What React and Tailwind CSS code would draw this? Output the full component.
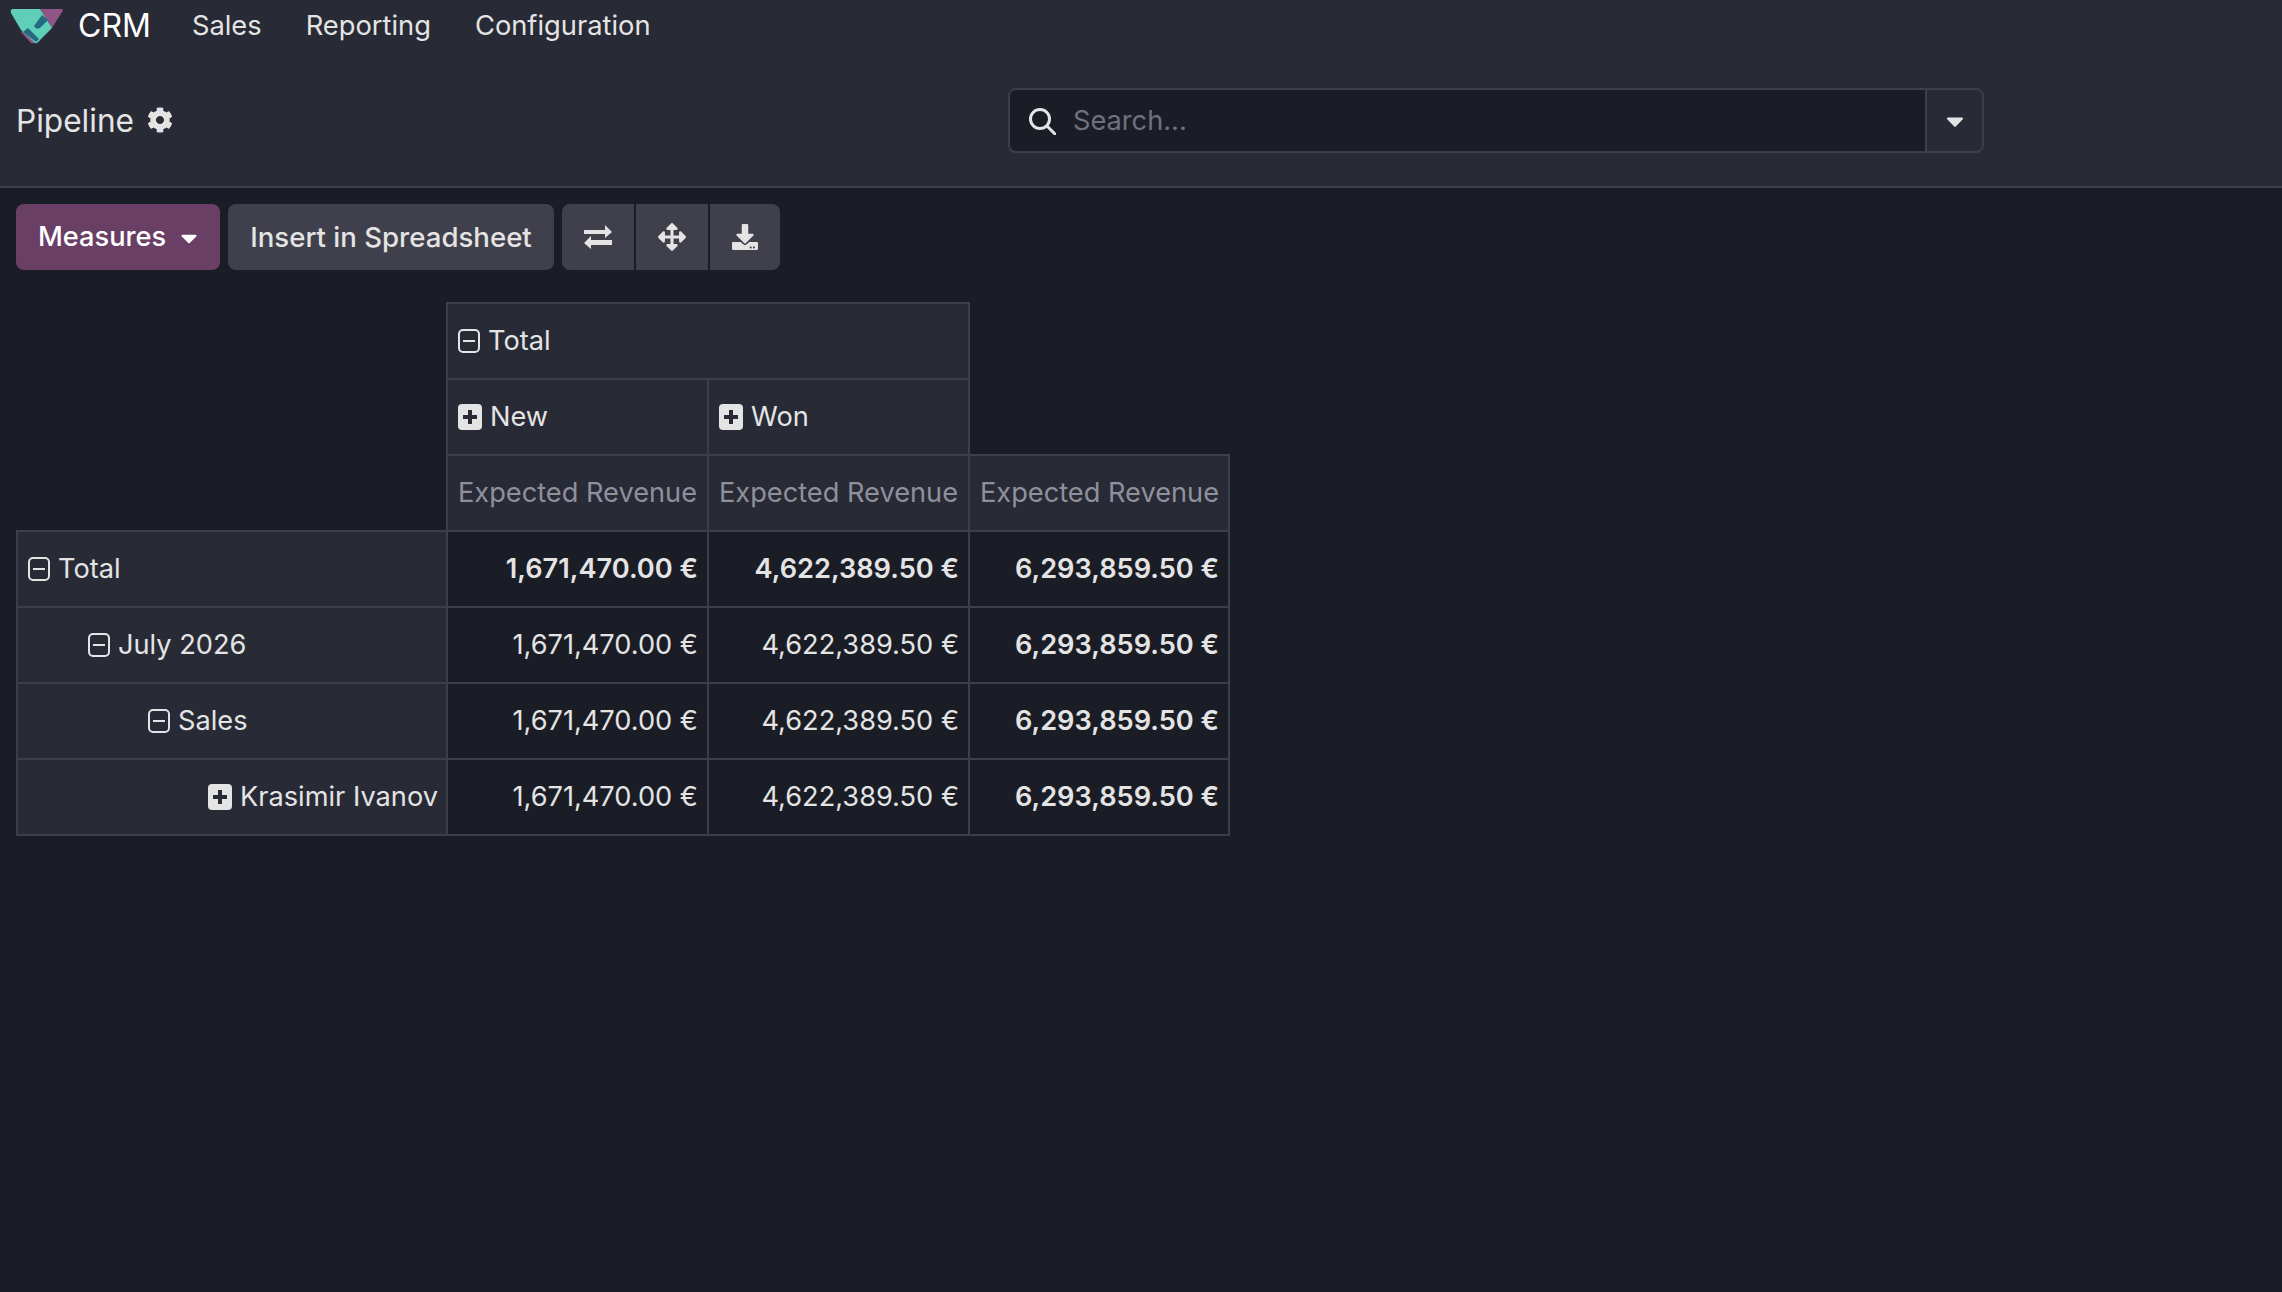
import React from 'react';
import { FaCog, FaArrowsAlt, FaDownload, FaCaretDown } from 'react-icons/fa';

const revenue = { new: '1,671,470.00 €', won: '4,622,389.50 €', total: '6,293,859.50 €' };

const rows = [
  { label: 'Total', indent: 'pl-[10px]', open: true, bold: true },
  { label: 'July 2026', indent: 'pl-[70px]', open: true },
  { label: 'Sales', indent: 'pl-[130px]', open: true },
  { label: 'Krasimir Ivanov', indent: 'pl-[190px]', open: false },
];

const Logo = () => (
  <svg viewBox="0 0 54 36" className="w-[54px] h-[36px]">
    <path d="M30 1 H51 Q54 1 52 4 L42 20 Z" fill="#8f5586" />
    <path d="M11 24 L19 19 L30 33 L24 35 Q22 36 20 34 Z" fill="#8f5586" />
    <path d="M3 1 H30 L42 20 L27 35 Q25 36 23 33 L11 22 L1 5 Q0 1 3 1 Z" fill="#5fcfb8" />
    <path d="M24 18 L32 7 L38 12 L30 20 Q26 22 24 18 Z" fill="#256b80" />
    <path d="M13 24 L18 20 L29 31 L26 34 Z" fill="#256b80" />
  </svg>
);

// square-o with a minus, and the filled square with a plus
const ExpandIcon = ({ open }) =>
  open ? (
    <svg viewBox="0 0 22 24" className="w-[22px] h-[24px] shrink-0" fill="none" stroke="currentColor" strokeWidth="2">
      <rect x="1" y="1" width="20" height="22" rx="4" />
      <path d="M5 12 H17" />
    </svg>
  ) : (
    <svg viewBox="0 0 24 26" className="w-[24px] h-[26px] shrink-0">
      <rect width="24" height="26" rx="4" fill="currentColor" />
      <path d="M12 6 V20 M5 13 H19" stroke="#282a36" strokeWidth="4" />
    </svg>
  );

const ExchangeIcon = () => (
  <svg viewBox="0 0 30 24" className="w-[30px] h-[24px]" fill="currentColor">
    <path d="M1 5 H22 V0 L29 7 L22 13 V9 H1 Z" />
    <path d="M29 15 H8 V11 L1 18 L8 24 V20 H29 Z" />
  </svg>
);

const HeaderCell = ({ label, open, ...props }) => (
  <th {...props} className="border-2 border-[#3c3e4b] bg-[#282a36] px-[10px] pt-[1px] text-left font-normal">
    <span className="flex items-center gap-[8px]">
      <ExpandIcon open={open} />
      {label}
    </span>
  </th>
);

const MeasureCell = () => (
  <th className="border-2 border-[#3c3e4b] bg-[#282a36] px-[10px] pt-[1px] text-left font-normal text-[#8f909c] whitespace-nowrap">
    Expected Revenue
  </th>
);

const App = () => {
  return (
    <div className="min-h-[1292px] bg-[#1b1d26] text-[#e4e4e4] text-[27.2px] font-['Inter',sans-serif]">
      <header className="bg-[#282a36] border-b-2 border-[#3c3e4b] h-[188px]">
        <nav className="flex items-center h-[52px] pl-[10px]">
          <Logo />
          <span className="ml-[14px] text-[32px] text-white">CRM</span>
          <div className="flex gap-[44px] ml-[41px] pt-[1px] text-[27.3px]">
            <span>Sales</span>
            <span>Reporting</span>
            <span>Configuration</span>
          </div>
        </nav>
        <div className="grid grid-cols-[1008px_976px] items-center pt-[36px]">
          <div className="flex items-center gap-[13px] pl-[16px]">
            <span className="text-[31.6px]">Pipeline</span>
            <FaCog className="w-[26px] h-[26px]" />
          </div>
          <div className="flex h-[65px] border-2 border-[#3c3e4b] rounded-[8px] overflow-hidden">
            <div className="flex-1 flex items-center bg-[#1b1d26]">
              <svg viewBox="0 0 28 28" className="w-[28px] h-[28px] ml-[18px]" fill="none" stroke="#e4e4e4" strokeWidth="3">
                <circle cx="12" cy="12" r="9.5" />
                <path d="M19 19 L27 27" strokeLinecap="round" />
              </svg>
              <span className="ml-[17px] pt-[1px] text-[#70717e]">Search...</span>
            </div>
            <div className="w-[57px] border-l-2 border-[#3c3e4b] flex items-center justify-center">
              <FaCaretDown className="w-[28px] h-[28px]" />
            </div>
          </div>
        </div>
      </header>

      <main className="px-[16px]">
        <div className="flex gap-[8px] pt-[16px]">
          <button className="flex items-center justify-between w-[204px] h-[66px] pl-[22px] pr-[18px] pt-[1px] rounded-[8px] bg-[#6a3f66] text-white font-medium">
            Measures
            <FaCaretDown className="w-[26px] h-[26px]" />
          </button>
          <button className="w-[326px] h-[66px] pt-[1px] rounded-[8px] bg-[#3f404c] font-medium text-[27.6px]">
            Insert in Spreadsheet
          </button>
          <div className="flex gap-[2px]">
            <button className="flex items-center justify-center w-[72px] h-[66px] rounded-l-[8px] bg-[#3f404c]">
              <ExchangeIcon />
            </button>
            <button className="flex items-center justify-center w-[72px] h-[66px] bg-[#3f404c]">
              <FaArrowsAlt className="w-[28px] h-[28px]" />
            </button>
            <button className="flex items-center justify-center w-[70px] h-[66px] rounded-r-[8px] bg-[#3f404c]">
              <FaDownload className="w-[26px] h-[26px]" />
            </button>
          </div>
        </div>

        <table className="mt-[32px] border-collapse table-fixed w-[1212px]">
          <colgroup>
            <col className="w-[430px]" />
            <col className="w-[261px]" />
            <col className="w-[261px]" />
            <col className="w-[260px]" />
          </colgroup>
          <thead>
            <tr className="h-[76px]">
              <th />
              <HeaderCell label="Total" open colSpan={2} />
            </tr>
            <tr className="h-[76px]">
              <th />
              <HeaderCell label="New" />
              <HeaderCell label="Won" />
            </tr>
            <tr className="h-[76px]">
              <th />
              <MeasureCell />
              <MeasureCell />
              <MeasureCell />
            </tr>
          </thead>
          <tbody>
            {rows.map(row => (
              <tr key={row.label} className="h-[76px]">
                <th className={`border-2 border-[#3c3e4b] bg-[#282a36] pr-[10px] pt-[1px] text-left font-normal ${row.indent}`}>
                  <span className="flex items-center gap-[8px] whitespace-nowrap">
                    <ExpandIcon open={row.open} />
                    {row.label}
                  </span>
                </th>
                {[revenue.new, revenue.won].map((value, i) => (
                  <td
                    key={i}
                    className={`border-2 border-[#3c3e4b] pl-[10px] pr-[9px] pt-[1px] text-right whitespace-nowrap ${row.bold ? 'font-semibold' : ''}`}
                  >
                    {value}
                  </td>
                ))}
                <td className="border-2 border-[#3c3e4b] pl-[10px] pr-[9px] pt-[1px] text-right font-semibold whitespace-nowrap">
                  {revenue.total}
                </td>
              </tr>
            ))}
          </tbody>
        </table>
      </main>
    </div>
  );
};

export default App;
